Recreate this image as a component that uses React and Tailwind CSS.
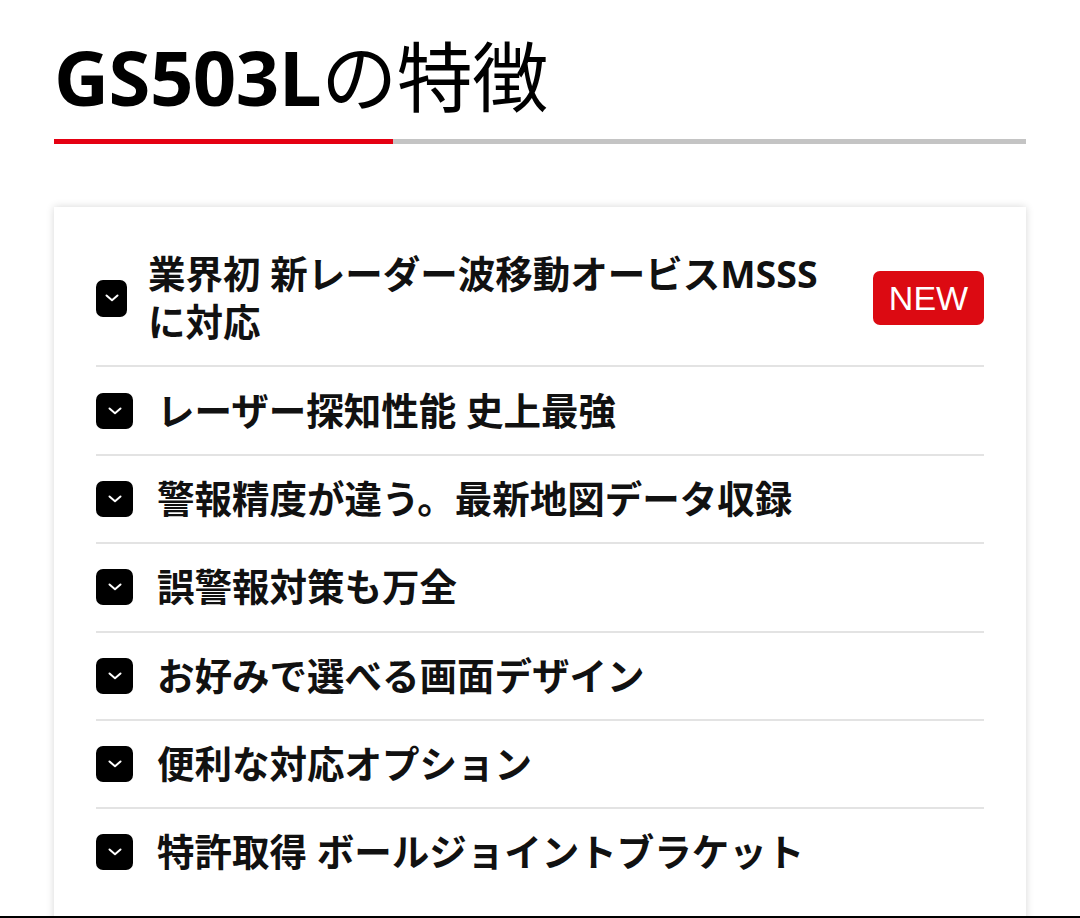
import React from 'react';

const features = [
  { title: '業界初 新レーダー波移動オービスMSSSに対応', isNew: true },
  { title: 'レーザー探知性能 史上最強' },
  { title: '警報精度が違う。最新地図データ収録' },
  { title: '誤警報対策も万全' },
  { title: 'お好みで選べる画面デザイン' },
  { title: '便利な対応オプション' },
  { title: '特許取得 ボールジョイントブラケット' },
];

const Chevron = () => (
  <svg width="14" height="8" viewBox="0 0 14 8" fill="none">
    <path d="M1.5 1.5 L7 6.2 L12.5 1.5" stroke="white" strokeWidth="2" strokeLinecap="round" strokeLinejoin="round" />
  </svg>
);

const FeatureRow = ({ item, last }) => (
  <div className={`flex items-center py-[19.2px] ${last ? '' : 'border-b-2 border-[#e3e3e3]'}`}>
    <div
      className={`${item.isNew ? 'w-[31px] h-[37px]' : 'w-[37px] h-[36px]'} shrink-0 rounded-[7px] bg-black flex items-center justify-center`}
    >
      <Chevron />
    </div>
    <div className={`flex-1 ${item.isNew ? 'ml-[21px] pr-[30px]' : 'ml-[24px]'} text-[37.5px] leading-[48px] font-bold text-[#111]`}>
      {item.title}
    </div>
    {item.isNew && (
      <span className="shrink-0 w-[111px] h-[54px] rounded-[7px] bg-[#dc0a12] text-white flex items-center justify-center text-[34px] font-['Liberation_Sans',Arial,sans-serif] font-normal">
        NEW
      </span>
    )}
  </div>
);

export default function App() {
  return (
    <div className="min-h-[918px] bg-white font-['Noto_Sans','Noto_Sans_CJK_JP',sans-serif]">
      <div className="px-[54px] pt-[35px]">
        <h1 className="text-[76px] leading-none font-bold text-black font-['Open_Sans','Noto_Sans_CJK_JP',sans-serif] tracking-[-0.5px]">
          GS503L<span className="font-normal font-['Noto_Sans_CJK_JP',sans-serif]">の特徴</span>
        </h1>
        <div className="mt-[24px] flex h-[5px]">
          <div className="w-[339px] bg-[#e50012]" />
          <div className="flex-1 bg-[#c4c4c4]" />
        </div>

        {/* feature list card */}
        <div className="mt-[63px] bg-white shadow-[0_0_8px_rgba(0,0,0,0.16)] px-[42px] pt-[24px] pb-[30px]">
          {features.map((item, i) => (
            <FeatureRow key={i} item={item} last={i === features.length - 1} />
          ))}
        </div>
      </div>
      <div className="fixed bottom-0 left-0 right-0 h-[2px] bg-black" />
    </div>
  );
}
